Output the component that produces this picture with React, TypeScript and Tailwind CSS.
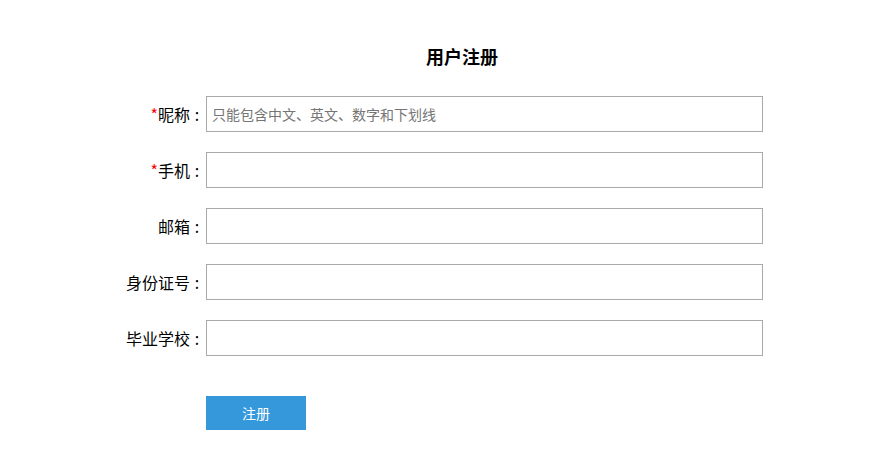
import React from 'react';

const fields = [
  { label: '昵称', required: true, placeholder: '只能包含中文、英文、数字和下划线' },
  { label: '手机', required: true, placeholder: '' },
  { label: '邮箱', required: false, placeholder: '' },
  { label: '身份证号', required: false, placeholder: '' },
  { label: '毕业学校', required: false, placeholder: '' },
];

export default function App() {
  return (
    <div
      className="w-[882px] h-[467px] bg-white text-black"
      style={{ fontFamily: '"Microsoft YaHei", "Noto Sans CJK SC", sans-serif' }}
    >
      <div className="pt-[44px] pl-[42px] text-center text-[18px] font-bold leading-[24px]">用户注册</div>
      <form className="mt-[28px] flex flex-col gap-[20px]" onSubmit={(e) => e.preventDefault()}>
        {fields.map((f) => (
          <div key={f.label} className="flex items-center">
            <label className="w-[206px] pr-[2px] text-right text-[16px] leading-[36px]">
              {f.required && <span className="text-[#ff0000]">*</span>}
              {f.label}
              <span className="inline-block w-[14px] text-center">:</span>
            </label>
            <input
              type="text"
              placeholder={f.placeholder}
              className="w-[557px] h-[36px] border border-[#a9a9a9] px-[5px] text-[14px] outline-none placeholder:text-[#757575]"
            />
          </div>
        ))}
        <div className="pl-[206px] pt-[20px]">
          <button type="submit" className="w-[100px] h-[34px] bg-[#3498db] text-white text-[14px]">
            注册
          </button>
        </div>
      </form>
    </div>
  );
}
